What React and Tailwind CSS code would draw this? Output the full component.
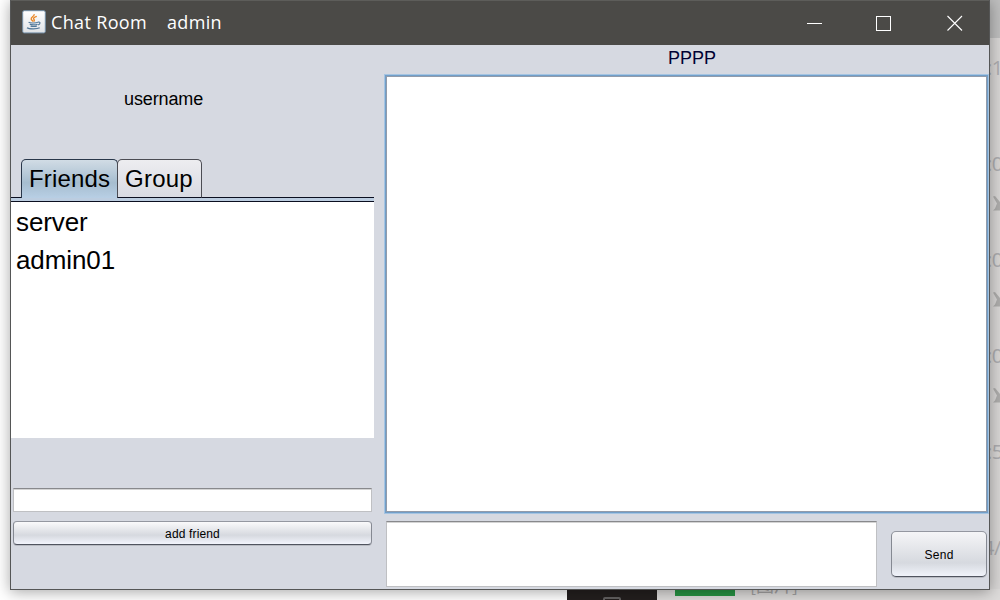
import React from "react";

const arial = "font-['Liberation_Sans',Arial,sans-serif]";

function JavaIcon() {
  return (
    <svg className="-mt-[2px]" width="24" height="24" viewBox="0 0 24 24" fill="none">
      <defs>
        <linearGradient id="tile" x1="0" y1="0" x2="0" y2="1">
          <stop offset="0" stopColor="#ffffff" />
          <stop offset="1" stopColor="#dfe2e6" />
        </linearGradient>
      </defs>
      <rect x="0.7" y="0.7" width="22.6" height="22.2" rx="1.5" fill="url(#tile)" stroke="#7590a8" strokeWidth="1" />
      <path d="M12.2 4.2c.5 2.3-3.7 3-3 5 .3.9 1.4 1.5 2 2.4M14.8 6.3c-2.6.8-4.1 2-2.8 3.2.5.5.5 1.2-.3 2" stroke="#e98524" strokeWidth="1.3" />
      <path d="M6.6 12.3c1.4 1 8 .8 9.4-.2M7.8 14.2c1 .8 6.5.8 7.8 0M8.6 16c1 .7 5 .7 6.3 0M16 12.1c2.7-.6 2.6 2 .1 2.9M5 17.8c2 1.5 10.500 1.4 12.700 0" stroke="#527898" strokeWidth="1.15" />
    </svg>
  );
}

function Sash() {
  return (
    <svg className="mt-[19px] ml-[4px] block" width="10" height="17" viewBox="0 0 10 17">
      <path d="M0 1.500 2 1l5 6 3-3v4L7.500 10l2.500 3v2.500H0l2-2 2-5z" fill="#aeadac" />
    </svg>
  );
}

function BackgroundApp() {
  const rows = [
    [":1", false],
    [":0", true],
    [":0", true],
    [":0", true],
    [":5", false],
    ["4/", false],
  ];
  return (
    <div className="flex h-full flex-col bg-[#f6f6f6]">
      <div className="flex h-[589px]">
        <div className="flex-1 bg-white" />
        <div className="w-[11px] bg-[#d8d6d5]">
          <div className="h-[38px] bg-[#bebebe]" />
          <div className="pt-[18px] font-['Open_Sans','Noto_Sans',sans-serif] text-[20px] leading-[24px] tracking-[-0.5px] text-[#adadb0]">
            {rows.map(([text, icon], i) => (
              <div key={i} className="h-24 whitespace-nowrap">
                <div className={text === "4/" ? "-ml-[6px]" : "-ml-[2px]"}>{text}</div>
                {icon && <Sash />}
              </div>
            ))}
          </div>
        </div>
      </div>
      <div className="relative flex h-[11px] overflow-hidden">
        <div className="w-[567px] bg-white" />
        <div className="flex w-[90px] justify-center bg-[#231f1e] pt-2">
          <div className="h-2 w-[18px] rounded-t-[2px] border-2 border-[#626060]" />
        </div>
        <div className="flex flex-1 bg-[#dddbda] pl-[18px]">
          <div className="h-[7px] w-[60px] bg-[#279443]" />
          <div className="-mt-[17px] ml-[15px] h-6 font-['Noto_Sans_CJK_SC',sans-serif] text-[18px] leading-6 text-[#a3a2a2]">[图片]</div>
        </div>
      </div>
    </div>
  );
}

function TitleBar() {
  return (
    <div className="flex h-[45px] shrink-0 items-center border-t border-[#5d5d5a] bg-[#4b4a47] pl-[11px] text-white">
      <JavaIcon />
      <div className="-mt-[2px] ml-[5px] flex-1 whitespace-pre font-['Open_Sans','Noto_Sans',sans-serif] text-[18px] leading-6 tracking-[0.35px]">
        <span className="inline-block w-[116px]">Chat Room</span>
        <span>admin</span>
      </div>
      <svg className="-mt-px mr-[26px]" width="156" height="16" viewBox="0 0 156 16" fill="none" stroke="#fff">
        <path d="M0 8.500h15M69.500 1.500h14v14h-14z" shapeRendering="crispEdges" />
        <path d="m140.500 1 14.500 14.500M155 1l-14.500 14.500" strokeWidth="1.1" />
      </svg>
    </div>
  );
}

function FriendsPane() {
  return (
    <div className="flex w-[363px] flex-col">
      <div className="flex h-[114px] pt-[44px] pl-[113px] text-[18px] leading-5 tracking-[-0.12px]">username</div>
      <div className="flex h-[39px] items-stretch text-[24px] leading-[38px]">
        <div className="w-[10px] border-b border-[#0b0f20]" />
        <div className="w-[97px] rounded-t-[5px] border-x border-t border-[#29374a] bg-linear-to-b from-[#d1dce5] via-[#a6bdcf] via-60% to-[#b8cfe5] pl-[7px] tracking-[0.15px]">
          Friends
        </div>
        <div className="-ml-px w-[85px] rounded-t-[5px] border border-[#4b4c53] border-b-[#0b0f20] bg-linear-to-b from-[#ededf0] to-[#d8dae2] pl-[7px] tracking-[0.25px]">
          Group
        </div>
        <div className="flex-1 border-b border-[#0b0f20]" />
      </div>
      <div className="h-1 border-b border-[#0b0f20] bg-[#bccde0]" />
      <div className="h-[236px] bg-white pt-px pl-[5px] text-[26px] leading-[38px] tracking-[-0.1px]">
        <div>server</div>
        <div>admin01</div>
      </div>
      <div className="mx-[2px] mt-[50px] h-6 border border-[#bfc0c3] border-t-[#88898c] bg-white shadow-[inset_0_1px_0_#d4d4d4]" />
      <button className="mx-[2px] mt-[9px] h-6 rounded-[4px] border border-[#858992] border-t-[#9497a0] border-b-[#50545f] bg-linear-to-b from-[#fafafb] via-[#d6d9df] via-60% to-[#f2f4fc] text-[12px] leading-6 tracking-[0.15px] shadow-[0_1px_0_#b8bbc2]">
        add friend
      </button>
    </div>
  );
}

function ChatPane() {
  return (
    <div className="ml-[10px] flex w-[605px] flex-col">
      <div className="h-[29px] pt-[3px] pl-[11px] text-center text-[18px] leading-5 text-[#000033]">PPPP</div>
      <div className="h-[440px] border border-[#a5c4e2] bg-white">
        <div className="h-full border border-[#719fc9]">
          <div className="h-full border border-[#929baa]" />
        </div>
      </div>
      <div className="mt-[7px] flex pl-[2px]">
        <div className="h-[66px] w-[491px] border border-[#bfc0c3] border-t-[#88898c] bg-white shadow-[inset_0_1px_0_#d4d4d4]" />
        <button className="mt-[10px] ml-[14px] h-[46px] w-[96px] rounded-[5px] border border-[#858992] border-t-[#9497a0] border-b-[#50545f] bg-linear-to-b from-[#f5f5f7] via-[#d6d9df] via-70% to-[#f0f3fa] text-[12px] leading-[46px] tracking-[0.3px] shadow-[0_1px_0_#b8bbc2]">
          Send
        </button>
      </div>
    </div>
  );
}

export default function App() {
  return (
    <div className="relative h-[600px] w-[1000px] overflow-hidden">
      <BackgroundApp />
      <div className={`absolute top-0 left-[10px] flex h-[590px] w-[980px] flex-col border border-t-0 border-[#555656] bg-[#d6d9e1] text-black shadow-[0_2px_14px_rgba(0,0,0,0.35)] ${arial}`}>
        <TitleBar />
        <div className="flex flex-1">
          <FriendsPane />
          <ChatPane />
        </div>
      </div>
    </div>
  );
}
